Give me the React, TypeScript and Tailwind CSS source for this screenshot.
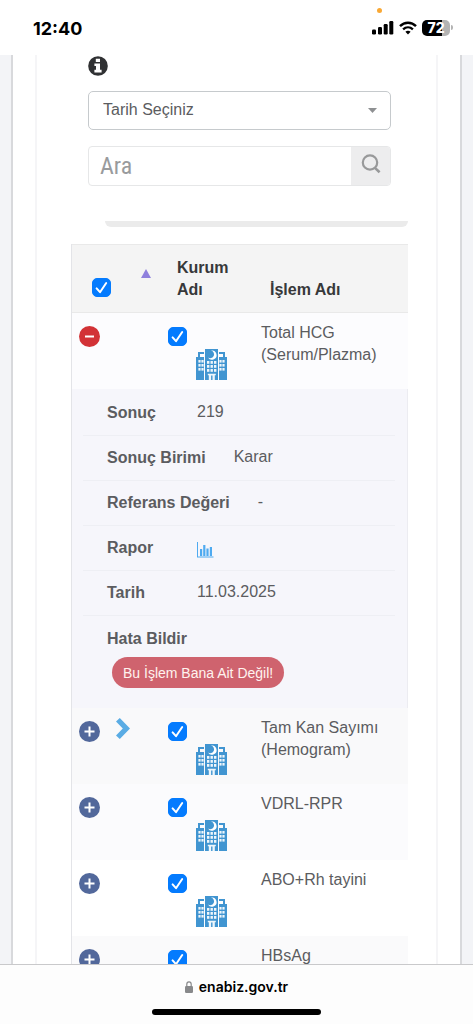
import { Fragment, useState } from "react";

type Test = {
  id: number;
  name: string;
  bg: string;
  arrow?: boolean;
};

const tests: Test[] = [
  { id: 1, name: "Total HCG (Serum/Plazma)", bg: "bg-[#fcfcfe]" },
  { id: 2, name: "Tam Kan Sayımı (Hemogram)", bg: "bg-[#f9f9fa]", arrow: true },
  { id: 3, name: "VDRL-RPR", bg: "bg-[#fbfbfd]" },
  { id: 4, name: "ABO+Rh tayini", bg: "bg-white" },
  { id: 5, name: "HBsAg", bg: "bg-[#fafafb]" },
];

function StatusBar() {
  return (
    <header className="relative flex h-[55px] shrink-0 items-center justify-between bg-white pr-5 pl-[33px] font-['Inter',sans-serif]">
      <span className="pt-[3px] text-lg font-bold text-black">12:40</span>
      <span className="absolute top-2 right-[91px] h-[5px] w-[5px] rounded-full bg-[#f9a834]" />
      <div className="flex items-center gap-[5px]">
        <svg width="22" height="14" viewBox="0 0 22 14" aria-hidden="true">
          <rect x="0" y="8.5" width="4" height="5" rx="1.2" />
          <rect x="6" y="6" width="4" height="7.5" rx="1.2" />
          <rect x="11.7" y="3" width="4" height="10.5" rx="1.2" />
          <rect x="17.3" y="0" width="4" height="13.5" rx="1.2" />
        </svg>
        <svg width="18" height="14" viewBox="0 0 18 14" fill="none" stroke="#000" aria-hidden="true">
          <path d="M1 5.2C5.5 .6 12.5 .6 17 5.2" strokeWidth="2.4" />
          <path d="M4.1 8.4C7 5.6 11 5.6 13.9 8.4" strokeWidth="2.3" />
          <path d="M9 13.4L6.4 10.8C7.9 9.4 10.1 9.4 11.6 10.8Z" fill="#000" stroke="none" />
        </svg>
        <div className="flex items-center gap-px">
          <span className="flex h-4 w-7 items-center justify-center rounded-[5px] bg-linear-to-r from-black from-72% to-[#b3b3b3] to-72% text-sm font-extrabold text-white">
            72
          </span>
          <span className="h-[5px] w-0.5 rounded-r-full bg-[#b3b3b3]" />
        </div>
      </div>
    </header>
  );
}

function Checkbox({ label }: { label: string }) {
  return (
    <span className="relative block h-[19px] w-[19px]">
      <input
        type="checkbox"
        defaultChecked
        aria-label={label}
        className="peer block h-[19px] w-[19px] appearance-none rounded-[5px] border border-[#b9bcc0] bg-white checked:border-[#047bfe] checked:bg-[#047bfe]"
      />
      <svg
        className="pointer-events-none absolute inset-0 hidden peer-checked:block"
        width="19"
        height="19"
        viewBox="0 0 19 19"
        fill="none"
        stroke="#fff"
        strokeWidth="2"
        strokeLinecap="round"
        strokeLinejoin="round"
        aria-hidden="true"
      >
        <path d="M4.6 10.4L8 14.2L14.2 5" />
      </svg>
    </span>
  );
}

function Hospital() {
  return (
    <svg width="31" height="31" viewBox="0 0 31 31" fill="#4195d1" aria-hidden="true">
      <path d="M9 0H22V31H9Z" />
      <path d="M0 8H8V31H0ZM23 8H31V31H23Z" />
      <path d="M2 3H8V5H4V8H2ZM23 3H29V8H27V5H23Z" />
      <path
        d="M14.8 1.6A4.6 4.6 0 1 1 12 8.4A3.8 3.8 0 1 0 14.8 1.6Z"
        fill="#fff"
      />
      <g fill="#eef6fb">
        {[12, 16, 20].map((y) => (
          <Fragment key={y}>
            <rect x="11" y={y} width="2.4" height="2.8" />
            <rect x="14.5" y={y} width="2.4" height="2.8" />
            <rect x="18" y={y} width="2.4" height="2.8" />
          </Fragment>
        ))}
        {[11, 15, 19].map((y) => (
          <Fragment key={y}>
            <rect x="2.4" y={y} width="2.2" height="2.6" />
            <rect x="5.4" y={y} width="2.2" height="2.6" />
            <rect x="23.4" y={y} width="2.2" height="2.6" />
            <rect x="26.4" y={y} width="2.2" height="2.6" />
          </Fragment>
        ))}
        <path d="M11.8 24.8H19.8V26.2H18.8V31H16.5V26.5H15.1V31H12.8V26.2H11.8Z" />
      </g>
    </svg>
  );
}

function ChartIcon() {
  return (
    <svg width="17" height="17" viewBox="0 0 17 17" fill="#4eaaf0" aria-hidden="true">
      <path d="M0 1H1V15.4H16.5V16.5H0Z" />
      <rect x="3" y="8" width="2.2" height="7" />
      <rect x="6.2" y="4" width="2.2" height="11" />
      <rect x="9.4" y="7.5" width="2.2" height="7.5" />
      <rect x="12.8" y="6" width="2.2" height="9" />
    </svg>
  );
}

function Details() {
  const rows = [
    { label: "Sonuç", value: "219" },
    { label: "Sonuç Birimi", value: "Karar" },
    { label: "Referans Değeri", value: "-" },
    {
      label: "Rapor",
      value: (
        <a href="#rapor" aria-label="Rapor" className="block pt-1">
          <ChartIcon />
        </a>
      ),
    },
    { label: "Tarih", value: "11.03.2025" },
  ];

  return (
    <dl className="pt-0.5">
      {rows.map((row) => (
        <div
          key={row.label}
          className="flex h-[45px] items-center border-b border-[#eeeff4] pl-6"
        >
          <dt className="mr-7 min-w-[62px] font-bold">{row.label}</dt>
          <dd className="pb-0.5">{row.value}</dd>
        </div>
      ))}
      <div className="pt-3 pb-5 pl-6">
        <dt className="font-bold">Hata Bildir</dt>
        <dd className="mt-[7px] ml-[5px]">
          <button
            type="button"
            className="h-[31px] rounded-full bg-[#cf636e] px-[11px] text-sm text-[#fff3ee]"
          >
            Bu İşlem Bana Ait Değil!
          </button>
        </dd>
      </div>
    </dl>
  );
}

function ResultsTable() {
  const [openId, setOpenId] = useState(1);

  return (
    <table className="w-full table-fixed border-separate border-spacing-0 border-l border-[#e3e4e8] text-left leading-[22px]">
      <colgroup>
        <col className="w-[44px]" />
        <col className="w-[44px]" />
        <col className="w-[93px]" />
        <col />
      </colgroup>
      <thead className="bg-[#f4f4f4] text-[#37383a]">
        <tr className="h-[69px]">
          <th className="border-y border-[#e9e9e9] pb-[15px] pl-5 align-bottom">
            <Checkbox label="Tümünü seç" />
          </th>
          <th className="border-y border-[#e9e9e9] pt-6 pl-[25px] align-top">
            <button type="button" aria-label="Sırala" className="block">
              <svg width="10" height="9" viewBox="0 0 10 9" fill="#8f80dd" aria-hidden="true">
                <path d="M5 0L10 9H0Z" />
              </svg>
            </button>
          </th>
          <th className="border-y border-[#e9e9e9] pr-5 pb-[11px] pl-[17px] align-bottom">
            Kurum Adı
          </th>
          <th className="border-y border-[#e9e9e9] pb-[11px] pl-[17px] align-bottom">İşlem Adı</th>
        </tr>
      </thead>
      <tbody className="text-[#5b5c60]">
        {tests.map((test) => {
          const open = test.id === openId;
          return (
            <Fragment key={test.id}>
              <tr className={`h-[76px] ${test.bg}`}>
                <td className="pt-[13px] pl-[7px] align-top">
                  <button
                    type="button"
                    aria-label={test.name}
                    aria-expanded={open}
                    onClick={() => setOpenId(open ? 0 : test.id)}
                    className={`flex h-[21px] w-[21px] items-center justify-center rounded-full ${open ? "bg-[#d23236]" : "bg-[#52689b]"}`}
                  >
                    <svg width="11" height="11" viewBox="0 0 11 11" stroke="#fff" strokeWidth="2" aria-hidden="true">
                      <path d={open ? "M1 5.5H10" : "M.5 5.5H10.5M5.5 .5V10.5"} />
                    </svg>
                  </button>
                </td>
                <td className="pt-[10px] align-top">
                  {test.arrow && (
                    <svg width="15" height="21" viewBox="0 0 15 21" fill="#5aace4" aria-hidden="true">
                      <path d="M0 3.6L3.8 0L14 10.5L3.8 21L0 17.4L6.8 10.5Z" />
                    </svg>
                  )}
                </td>
                <td className="pt-[14px] pl-2 align-top">
                  <Checkbox label={`${test.name} seç`} />
                  <div className="mt-[3px] ml-7">
                    <Hospital />
                  </div>
                </td>
                <td className="pt-[9px] pr-5 pl-2 align-top">{test.name}</td>
              </tr>
              {open && (
                <tr className="bg-[#f6f6fb]">
                  <td colSpan={4} className="border-r border-[#ececf1] pr-3 pl-[11px]">
                    <Details />
                  </td>
                </tr>
              )}
            </Fragment>
          );
        })}
      </tbody>
    </table>
  );
}

function App() {
  return (
    <div className="flex h-screen flex-col overflow-hidden bg-white font-['Liberation_Sans',Arial,sans-serif] text-base">
      <StatusBar />

      <main className="min-h-0 flex-1 overflow-hidden bg-[#f3f4f7] px-[11px]">
        <div className="border-x-2 border-[#d8d9dc] bg-white px-[22px]">
          <div className="border-x-2 border-[#f5f5f7]">
            <form className="pr-[45px] pl-[51px]" onSubmit={(e) => e.preventDefault()}>
              <button type="button" aria-label="Bilgi" className="block pt-px">
                <svg width="20" height="20" viewBox="0 0 20 20" aria-hidden="true">
                  <circle cx="10" cy="10" r="9.8" fill="#303133" />
                  <path
                    d="M7.8 2.8H12V6H7.8ZM6.4 7.4H12V13.8H13.6V16.4H6.4V13.8H8V10H6.4Z"
                    fill="#fff"
                  />
                </svg>
              </button>

              <div className="relative mt-[15px]">
                <select
                  aria-label="Tarih"
                  className="h-[39px] w-full appearance-none rounded-[5px] border border-[#c6cacd] bg-white px-[14px] pb-0.5 text-[#5b5c60]"
                >
                  <option>Tarih Seçiniz</option>
                </select>
                <svg
                  className="pointer-events-none absolute top-[17px] right-[14px]"
                  width="9"
                  height="5"
                  viewBox="0 0 9 5"
                  fill="#8e9092"
                  aria-hidden="true"
                >
                  <path d="M0 0H9L4.5 5Z" />
                </svg>
              </div>

              <div className="mt-4 flex h-10 overflow-hidden rounded-[4px] border border-[#e6e7e8]">
                <input
                  type="text"
                  placeholder="Ara"
                  aria-label="Ara"
                  className="min-w-0 flex-1 px-[11px] font-['Roboto_Condensed','Roboto',sans-serif] text-2xl text-[#5b5c60] outline-none placeholder:text-[#999b9d]"
                />
                <button
                  type="submit"
                  aria-label="Ara"
                  className="flex w-[39px] items-center justify-center bg-[#ededee] pb-1"
                >
                  <svg width="20" height="20" viewBox="0 0 20 20" fill="none" stroke="#98999a" aria-hidden="true">
                    <circle cx="9" cy="8.5" r="7.2" strokeWidth="2.2" />
                    <path d="M13.6 13.6L18.6 18.2" strokeWidth="2.6" />
                  </svg>
                </button>
              </div>
            </form>

            <div className="mt-[35px] mr-7 ml-[68px] h-1.5 rounded-b-md bg-[#ebebeb]" />

            <div className="mt-[17px] mr-7 ml-[34px]">
              <ResultsTable />
            </div>
          </div>
        </div>
      </main>

      <footer className="flex h-[60px] shrink-0 flex-col items-center border-t border-[#c9c9cb] bg-[#fdfdfd] pt-[11px] font-['Inter',sans-serif]">
        <div className="flex items-center gap-1.5 text-sm leading-[22px] font-semibold text-black">
          <svg width="8" height="12" viewBox="0 0 8 12" aria-hidden="true">
            <rect y="5" width="8" height="7" rx="1.2" fill="#88898b" />
            <path d="M1.8 5.5V3.2A2.2 2.4 0 0 1 6.2 3.2V5.5" fill="none" stroke="#88898b" strokeWidth="1.2" />
          </svg>
          <span>enabiz.gov.tr</span>
        </div>
        <div className="mt-[11px] h-1.5 w-[169px] rounded-full bg-black" />
      </footer>
    </div>
  );
}

export default App;
